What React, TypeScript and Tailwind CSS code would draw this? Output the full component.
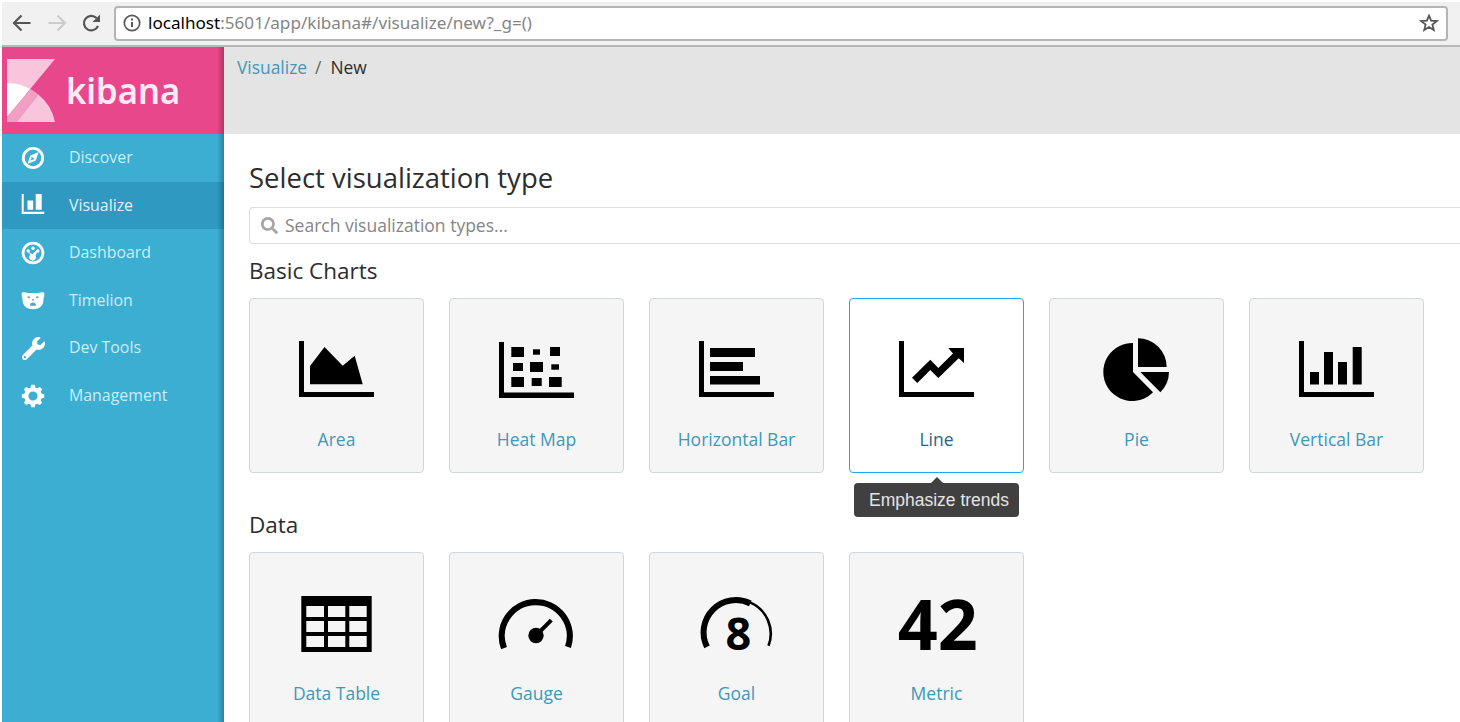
import type { ReactNode } from "react";
import { FaSearch, FaWrench } from "react-icons/fa";

const Axes = ({ y = 43 }: { y?: number }) => <path d={`M50 ${y}h5v51h70v5H50z`} />;

type Box = [number, number, number, number];
const Boxes = ({ items }: { items: Box[] }) => (
  <>
    {items.map(([x, y, w, h], i) => (
      <rect key={i} x={x} y={y} width={w} height={h} />
    ))}
  </>
);

const heat: Box[] = [
  [62.3, 49, 12.7, 10], [84, 51.3, 7, 5.4], [101, 49, 10, 9],
  [64, 65, 10, 8], [81, 64, 13, 10], [102.3, 66.3, 7.7, 5.4],
  [62.3, 79, 12.7, 10], [82.7, 80, 10, 8], [100, 79, 12.7, 10],
];

type Item = { name: string; art: ReactNode; tip?: string };

const basic: Item[] = [
  { name: "Area", art: <><Axes /><path d="M61 86.3V68l14.5-19 18.2 18.7 12-10 8 28.6z" /></> },
  { name: "Heat Map", art: <><Axes y={44} /><path d="M50 94.500h75v5.500H50z" /><Boxes items={heat} /></> },
  {
    name: "Horizontal Bar",
    art: <><Axes /><Boxes items={[[61, 50, 45, 9], [61, 64, 33, 9], [61, 78, 50, 8.5]]} /></>,
  },
  {
    name: "Line",
    tip: "Emphasize trends",
    art: <><Axes /><path d="M63 79.7L81.3 61.7l8 8.3L104 55.5 99.3 50H115v15l-5.3-4.7L89.3 80l-8-8-13 13z" /></>,
  },
  {
    name: "Pie",
    art: <path d="M84 74V45a29 29 0 1 0 20 49.3zM89 69V40.3A28.7 28.7 0 0 1 117.7 69zM91.3 74H120a28.7 28.7 0 0 1-8.7 20.3z" />,
  },
  {
    name: "Vertical Bar",
    art: <><Axes /><Boxes items={[[61, 74, 9, 12.5], [75, 54, 9, 32.5], [89, 64, 9, 22.5], [103.7, 49, 9, 37.5]]} /></>,
  },
];

const data: Item[] = [
  {
    name: "Data Table",
    art: (
      <path
        fillRule="evenodd"
        d="M52.3 44h70.4v56H52.3zM57.3 54v11H75V54zM79 54v11h17.3V54zM100.3 54v11h17.4V54zM57.3 69v11H75V69zM79 69v11h17.3V69zM100.3 69v11h17.4V69zM57.3 84v11H75V84zM79 84v11h17.3V84zM100.3 84v11h17.4V84z"
      />
    ),
  },
  {
    name: "Gauge",
    art: (
      <>
        <path d="M55 96.2A34 34 0 1 1 119 95" fill="none" stroke="#000" strokeWidth="6.2" />
        <circle cx="87" cy="83.5" r="7.7" />
        <path d="M87 83.5L102.3 68.2" stroke="#000" strokeWidth="4" />
      </>
    ),
  },
  {
    name: "Goal",
    art: (
      <>
        <path d="M58 94.900A32.300 32.300 0 0 1 101.300 51.500" fill="none" stroke="#000" strokeWidth="6" />
        <path d="M101 50.400A34 34 0 0 1 119.500 93.800" fill="none" stroke="#000" strokeWidth="2.600" />
        <text x="89.3" y="98" textAnchor="middle" fontSize="45" fontWeight="700">8</text>
      </>
    ),
  },
  { name: "Metric", art: <text x="88.7" y="98" textAnchor="middle" fontSize="70" fontWeight="700">42</text> },
];

function Card({ name, art, tip }: Item) {
  return (
    <div
      className={
        tip
          ? "relative h-[175px] w-[175px] shrink-0 rounded border border-[#19a9f5] bg-white text-center"
          : "relative h-[175px] w-[175px] shrink-0 rounded border border-[#d0d7dc] bg-[#f5f5f5] text-center"
      }
    >
      <svg viewBox="1 1 173 127" className="block h-[127px] w-[173px]">{art}</svg>
      <div className={tip ? "text-[17.500px] leading-[26px] text-[#2a6580]" : "text-[17.500px] leading-[26px] text-[#4098b9]"}>
        {name}
      </div>
      {tip && (
        <div className="absolute left-1 top-[178px] flex w-[165px] flex-col items-center">
          <div className="h-0 w-0 border-x-[6px] border-b-[6px] border-x-transparent border-b-[#404040]" />
          <div className="h-[34px] w-full whitespace-nowrap rounded bg-[#404040] pl-[5px] font-['Liberation_Sans',sans-serif] text-[17.500px] leading-[34px] text-[#e4e4e4]">
            {tip}
          </div>
        </div>
      )}
    </div>
  );
}

const Section = ({ title, items }: { title: string; items: Item[] }) => (
  <section className="h-[254px]">
    <h2 className="h-[54px] text-[22.500px] leading-[54px] text-[#2d2d2d]">{title}</h2>
    <div className="flex gap-[25px]">
      {items.map((item) => (
        <Card key={item.name} {...item} />
      ))}
    </div>
  </section>
);

const nav: { name: string; icon: ReactNode }[] = [
  {
    name: "Discover",
    icon: (
      <svg viewBox="0 0 24 24" className="size-6">
        <circle cx="12" cy="12" r="9.7" fill="none" stroke="#fff" strokeWidth="2.8" />
        <path fillRule="evenodd" d="M17.6 6l-2.8 8.4L6.4 18l2.8-8.3zM10.8 10.7l-1 3.7 3.6-1.3z" />
      </svg>
    ),
  },
  {
    name: "Visualize",
    icon: (
      <svg viewBox="0 0 24 24" className="size-6">
        <path d="M.7 1h2v17.700h20.600V21H.7zM6.500 7.500h5.700v9.200H6.500zM14.700 1h6v15.700h-6z" />
      </svg>
    ),
  },
  {
    name: "Dashboard",
    icon: (
      <svg viewBox="0 0 24 24" className="size-6">
        <circle cx="12" cy="12" r="9.9" fill="none" stroke="#fff" strokeWidth="2.8" />
        <circle cx="7.2" cy="10" r="1.7" />
        <circle cx="12" cy="7.3" r="1.7" />
        <circle cx="16.8" cy="10" r="1.7" />
        <path d="M8.2 11.2l3.2 2 4.1-4 1 .9-2 4.600a3.300 3.300 0 1 1-5.500-.5z" />
      </svg>
    ),
  },
  {
    name: "Timelion",
    icon: (
      <svg viewBox="0 0 24 24" className="size-6">
        <path d="M.8 3.700c2-.8 4-.2 6 .3h10.400c2-.5 4-1.100 6-.3.4 3-.1 4.600-.7 5.600.2 7.500-3.600 11-10.500 11S1.300 16.800 1.500 9.300C.9 8.300.4 6.700.8 3.700z" />
        <path d="M6.500 7.800l2.500.7M17.500 7.800l-2.500.7M11 10.800h2M9.800 16.100c0-2.600 4.400-2.600 4.400 0z" stroke="#5b9fb4" strokeWidth="1.300" fill="#5b9fb4" />
      </svg>
    ),
  },
  { name: "Dev Tools", icon: <FaWrench className="size-[23px]" /> },
  {
    name: "Management",
    icon: (
      <svg viewBox="0 0 24 24" className="size-6">
        <circle cx="12" cy="12" r="6.700" fill="none" stroke="#fff" strokeWidth="4.200" />
        {[0, 45, 90, 135, 180, 225, 270, 315].map((a) => (
          <path key={a} d="M10.300.800h3.400l.9 3.700H9.400z" transform={`rotate(${a} 12 12)`} />
        ))}
      </svg>
    ),
  },
];

export default function App() {
  return (
    <div className="flex h-[722px] w-[1460px] flex-col overflow-hidden bg-white pl-0.5 pt-0.5 font-['Open_Sans','Noto_Sans',sans-serif]">
      <header className="flex h-[45px] shrink-0 items-center border-b-2 border-[#b8b8b8] bg-[#f1f1f1] pb-px pl-2.5">
        <svg viewBox="0 0 90 24" className="h-6 w-[90px]" fill="none" strokeWidth="2.2">
          <path d="M18.500 12H2M9.500 4.500L2 12l7.500 7.500" stroke="#555" />
          <path d="M36.500 12H53M45.500 4.500L53 12l-7.500 7.500" stroke="#ccc" />
          <path d="M86 15a7.300 7.300 0 1 1-1.500-8" stroke="#555" />
          <path d="M88 3.500V11h-7.500z" fill="#555" />
        </svg>
        <div className="ml-3 flex h-[35px] w-[1334px] items-center rounded border-2 border-[#b5b5b5] bg-white pl-[7px] pr-[7px]">
          <svg viewBox="0 0 18 18" className="size-[18px]" fill="none" stroke="#5a5a5a" strokeWidth="1.700">
            <circle cx="9" cy="9" r="7.700" />
            <path d="M9 8v5M9 4.500v2" strokeWidth="2" />
          </svg>
          <div className="ml-[7px] flex-1 whitespace-nowrap font-['Noto_Sans',sans-serif] text-[17.100px] leading-[30px] text-[#858585]">
            <span className="text-black">localhost</span>:5601/app/kibana#/visualize/new?_g=()
          </div>
          <svg viewBox="0 0 20 20" className="size-5" fill="none" stroke="#555" strokeWidth="1.800">
            <path d="M10 2.700l2.100 5 5.600.4-4.300 3.500 1.400 5.500-4.800-3-4.800 3 1.400-5.500L2.300 8.100l5.600-.4z" />
          </svg>
        </div>
      </header>
      <div className="flex min-h-0 flex-1">
        <aside className="relative w-[222px] shrink-0 bg-[#3caed2]">
          <div className="flex h-[87px] bg-[#e8488b] pl-[5px] pt-3">
            <svg viewBox="0 0 48 63" className="h-[63px] w-12">
              <path d="M0 0h48L0 58z" fill="#f8c5dc" />
              <path d="M0 24A48 48 0 0 1 23.300 30L0 58z" fill="#fff" />
              <path d="M23.300 30L0 58v5h9.700L31.300 35.600A48 48 0 0 0 23.300 30z" fill="#f19fc3" />
              <path d="M31.300 35.600L9.700 63H48a48 48 0 0 0-16.700-27.400z" fill="#f8c5dc" />
            </svg>
            <div className="ml-[11px] font-['Noto_Sans',sans-serif] text-[36px] font-semibold leading-[64px] text-[#fdebf3]">
              <span className="inline-block origin-left scale-x-[0.96]">kibana</span>
            </div>
          </div>
          <nav>
            {nav.map(({ name, icon }) => (
              <a
                key={name}
                className={
                  name === "Visualize"
                    ? "flex h-[47.6px] items-center bg-[#2f99c2] pl-[19px] text-white"
                    : "flex h-[47.6px] items-center pl-[19px] text-white"
                }
              >
                <span className="flex w-6 justify-center [&>svg]:fill-white">{icon}</span>
                <span
                  className={
                    name === "Visualize"
                      ? "ml-6 pb-[1.500px] text-[15.900px] leading-6 text-[#e0f3f9]"
                      : "ml-6 pb-[1.500px] text-[15.900px] leading-6 text-[#c9eef7]"
                  }
                >
                  {name}
                </span>
              </a>
            ))}
          </nav>
          <div className="absolute inset-y-0 right-0 w-[7px] bg-gradient-to-r from-transparent to-black/25" />
        </aside>
        <main className="min-w-0 flex-1">
          <div className="flex h-[87px] gap-2 bg-[#e4e4e4] pl-[13px] pt-[7px] text-[17.400px] leading-[26px] text-[#2d2d2d]">
            <span className="text-[#4098b9]">Visualize</span>
            <span className="text-[#666]">/</span>
            <span className="pl-px">New</span>
          </div>
          <div className="pl-[25px] pt-6">
            <h1 className="h-[49px] text-[27.500px] leading-10 text-[#2d2d2d]">Select visualization type</h1>
            <div className="flex h-[37px] items-center rounded-l border border-r-0 border-[#dedede] pb-px pl-[11px] text-[17.500px] text-[#858585]">
              <FaSearch className="mr-[7px] size-[17px] text-[#a5a5a5]" />
              Search visualization types...
            </div>
            <Section title="Basic Charts" items={basic} />
            <Section title="Data" items={data} />
          </div>
        </main>
      </div>
    </div>
  );
}
